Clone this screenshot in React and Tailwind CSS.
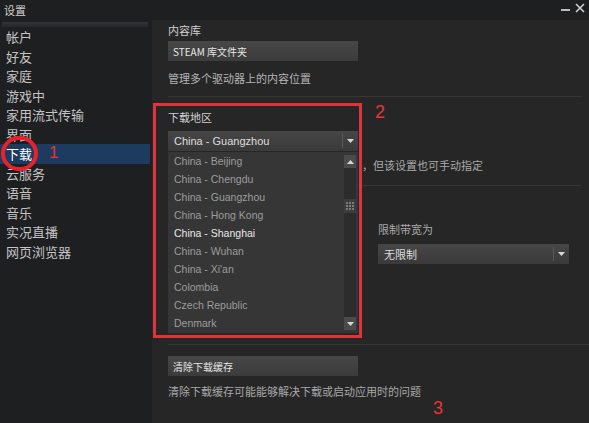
import React from 'react';

const cjk = { fontFamily: '"Noto Sans CJK SC", "Liberation Sans", sans-serif' };
const latin = { fontFamily: '"Liberation Sans", Arial, "Noto Sans CJK SC", sans-serif' };

const navItems = ['帐户', '好友', '家庭', '游戏中', '家用流式传输', '界面', '下载', '云服务', '语音', '音乐', '实况直播', '网页浏览器'];

const regions = [
    'China - Beijing',
    'China - Chengdu',
    'China - Guangzhou',
    'China - Hong Kong',
    'China - Shanghai',
    'China - Wuhan',
    "China - Xi'an",
    'Colombia',
    'Czech Republic',
    'Denmark',
];

function Arrow({ up }) {
    return (
        <svg width="7" height="4" viewBox="0 0 7 4" className={up ? 'rotate-180' : ''}>
            <path d="M0 0 H7 L3.5 4 Z" fill="#d8d8d8" />
        </svg>
    );
}

function Select({ value, className = '', font = latin }) {
    return (
        <div className={`flex h-5 items-center bg-gradient-to-b from-[#464646] to-[#3a3a3a] pl-[6px] text-[11px] text-[#dedede] ${className}`} style={font}>
            <span className="flex-1 truncate">{value}</span>
            <div className="flex h-[14px] w-4 items-center justify-center border-l border-[#5a5a5a]">
                <Arrow />
            </div>
        </div>
    );
}

function Button({ children }) {
    return (
        <div className="flex h-5 w-[190px] items-center bg-gradient-to-b from-[#474747] to-[#3b3b3b] px-[5px] text-[10px] text-[#e6e6e6]" style={cjk}>
            {children}
        </div>
    );
}

export default function App() {
    return (
        <div className="relative flex h-[423px] w-[589px] flex-col overflow-hidden bg-[#1e1f21] text-[#c8c8c8]" style={cjk}>
            {/* title bar */}
            <div className="flex h-5 items-center justify-between pl-1 pr-1">
                <span className="text-[11px] text-[#d0d0d0]">设置</span>
                <div className="flex items-start gap-[5px] self-start pt-[3px]">
                    <div className="mt-[6px] h-[2px] w-[9px] bg-[#bdbdbd]" />
                    <svg width="10" height="10" viewBox="0 0 10 10">
                        <path d="M1 1 L9 9 M9 1 L1 9" stroke="#cfcfcf" strokeWidth="1.6" />
                    </svg>
                </div>
            </div>

            <div className="flex flex-1">
                {/* sidebar */}
                <div className="flex w-[150px] flex-col pt-[2px]">
                    <div className="mx-[2px] h-[5px] bg-gradient-to-b from-[#333437] to-[#26272a]" />
                    <div className="flex flex-col">
                        {navItems.map((item) => (
                            <div
                                key={item}
                                className={`flex h-[19.5px] items-center pl-[6px] text-[13px] ${item === '下载' ? 'bg-[#1c3b5e] text-white' : 'text-[#c4c4c4]'}`}
                            >
                                {item}
                            </div>
                        ))}
                    </div>
                </div>

                {/* content */}
                <div className="ml-[2px] flex flex-1 flex-col bg-[#262626] pl-4 pt-[3px] text-[11px] text-[#c0c0c0]">
                    <div className="text-[11px] leading-[14px] text-[#d0d0d0]">内容库</div>
                    <div className="mt-[4px]">
                        <Button>STEAM 库文件夹</Button>
                    </div>
                    <div className="mt-[10px] leading-[14px] text-[#b4b4b4]">管理多个驱动器上的内容位置</div>
                    <div className="mt-[11px] mr-2 h-px bg-[#363636]" />

                    <div className="mt-[13px] leading-[14px] text-[#d0d0d0]">下载地区</div>
                    <div className="relative mt-[7px] w-[190px]">
                        <Select value="China - Guangzhou" className="w-[190px]" />
                        {/* open region list */}
                        <div className="absolute left-0 top-[21px] z-10 flex h-[181px] w-[190px] bg-[#363636]" style={latin}>
                            <div className="flex flex-1 flex-col pt-[1px]">
                                {regions.map((r) => (
                                    <div
                                        key={r}
                                        className={`flex h-[18px] items-center pl-[6px] text-[10.5px] ${r === 'China - Shanghai' ? 'text-[#e8e8e8]' : 'text-[#9c9c9c]'}`}
                                    >
                                        {r}
                                    </div>
                                ))}
                            </div>
                            <div className="mr-[2px] mt-[3px] mb-[3px] flex w-[12px] flex-col bg-[#2c2c2c]">
                                <div className="flex h-[13px] items-center justify-center bg-[#4b4b4b]">
                                    <Arrow up />
                                </div>
                                <div className="mt-[31px] flex h-[14px] items-center justify-center bg-[#3d3d3d]">
                                    <div className="grid grid-cols-3 gap-[1px]">
                                        {Array.from({ length: 9 }).map((_, i) => (
                                            <div key={i} className="h-[2px] w-[2px] bg-[#7a7a7a]" />
                                        ))}
                                    </div>
                                </div>
                                <div className="flex-1" />
                                <div className="flex h-[13px] items-center justify-center bg-[#4b4b4b]">
                                    <Arrow />
                                </div>
                            </div>
                        </div>
                    </div>
                    <div className="mt-[7px] flex leading-[14px] text-[#a8a8a8]">
                        <div className="w-[194px] shrink-0" />
                        <span className="whitespace-nowrap">，但该设置也可手动指定</span>
                    </div>
                    <div className="mt-[13px] mr-2 h-px bg-[#363636]" />

                    <div className="mt-[36px] flex gap-5">
                        <div className="w-[190px] shrink-0" />
                        <div className="flex w-[191px] flex-col">
                            <div className="leading-[14px] text-[#a8a8a8]">限制带宽为</div>
                            <Select value="无限制" font={cjk} className="mt-[8px] w-[191px]" />
                        </div>
                    </div>

                    <div className="mt-[80px] h-px bg-[#363636]" />
                    <div className="mt-[11px]">
                        <Button>清除下载缓存</Button>
                    </div>
                    <div className="mt-[8px] leading-[14px] text-[#a8a8a8]">清除下载缓存可能能够解决下载或启动应用时的问题</div>
                </div>
            </div>

            {/* red annotations */}
            <div className="pointer-events-none absolute left-[153px] top-[103px] z-20 h-[235px] w-[209px] border-[3px] border-[#e0343c]" />
            <div className="pointer-events-none absolute left-[1px] top-[136px] z-20 h-[35px] w-[37px] rounded-full border-[4px] border-[#e8222c]" />
            <div className="absolute left-[49px] top-[144px] z-20 text-[17px] leading-none text-[#e8343a]" style={latin}>1</div>
            <div className="absolute left-[375px] top-[103px] z-20 text-[18px] leading-none text-[#e8343a]" style={latin}>2</div>
            <div className="absolute left-[433px] top-[399px] z-20 text-[18px] leading-none text-[#e8343a]" style={latin}>3</div>
        </div>
    );
}
